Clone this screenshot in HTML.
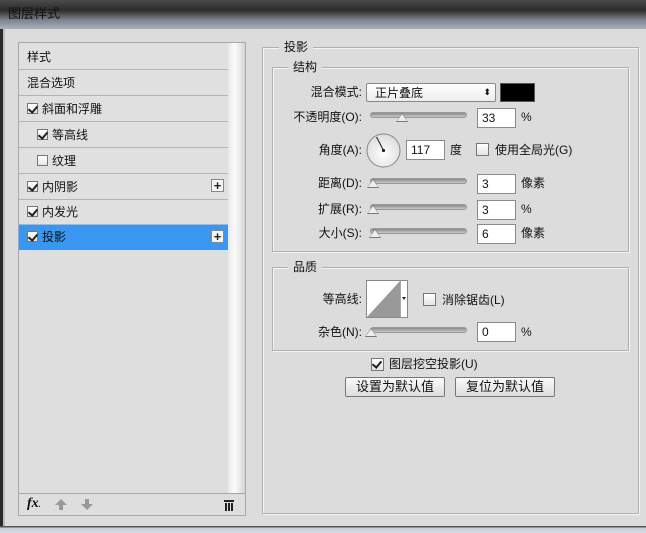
<!DOCTYPE html>
<html><head><meta charset="utf-8"><style>
*{margin:0;padding:0;box-sizing:border-box}
body{width:646px;height:533px;overflow:hidden;background:#dcdcdc;font-family:"Liberation Sans","Noto Sans CJK SC","WenQuanYi Zen Hei",sans-serif;font-size:12px;color:#111;position:relative}
.a{position:absolute}
.t{position:absolute;white-space:nowrap;line-height:14px}
.title{left:0;top:0;width:646px;height:29px;background:linear-gradient(#4a4a4a 0,#2c2c2c 35%,#7d858e 70%,#a9b1ba 100%)}
.row{position:absolute;left:19px;width:209px;height:26px;border-bottom:1px solid #b4b4b4;background:#e0e0e0}
.cb{position:absolute;width:11px;height:11px;border:1px solid #777;background:linear-gradient(#fff,#e4e4e4)}
.cb.on::after{content:"";position:absolute;left:2px;top:0px;width:4px;height:7px;border:solid #222;border-width:0 2px 2px 0;transform:rotate(40deg)}
.plus{position:absolute;right:4px;top:5px;width:13px;height:13px;border:1px solid #888;background:#f4f4f4;font-weight:bold;font-size:13px;line-height:11px;text-align:center;color:#222}
.box{position:absolute;border:1px solid #b0b0b0;box-shadow:1px 1px 0 #f4f4f4 inset,1px 1px 0 #f4f4f4}
.lg{position:absolute;background:#dcdcdc;padding:0 5px;line-height:14px}
.inp{position:absolute;width:39px;height:20px;background:#fff;border:1px solid #8a8a8a;padding:2px 4px;line-height:14px}
.tr{position:absolute;left:370px;width:97px;height:6px;border-radius:3px;background:linear-gradient(#8a8a8a,#c8c8c8);border:1px solid #999}
.th{position:absolute;width:0;height:0;border-left:6px solid transparent;border-right:6px solid transparent;border-bottom:9px solid #777}
.th::after{content:"";position:absolute;left:-5px;top:1px;border-left:5px solid transparent;border-right:5px solid transparent;border-bottom:7px solid #eee}
.lbl{position:absolute;text-align:right;width:100px;line-height:14px}
.btn{position:absolute;width:100px;height:20px;border:1px solid #777;border-radius:2px;background:linear-gradient(#fafafa,#dedede);text-align:center;line-height:18px;font-size:13px}
</style></head><body>
<div class="a title"></div>
<div class="t" style="left:8px;top:7px;color:#111;font-size:13px">图层样式</div>
<div class="a" style="left:0;top:29px;width:3px;height:497px;background:#2a2a2a"></div>
<div class="a" style="left:3px;top:29px;width:2px;height:497px;background:#bdbdbd"></div>
<div class="a" style="left:0;top:526px;width:646px;height:7px;background:linear-gradient(#555 0,#555 1px,#c8ccd4 2px,#d8dce4)"></div>

<div class="a" style="left:18px;top:42px;width:228px;height:474px;border:1px solid #a8a8a8;background:#dedede"></div>
<div class="a" style="left:228px;top:43px;width:17px;height:450px;background:linear-gradient(90deg,#e8e8e8,#fcfcfc 40%,#d4d4d4)"></div>
<div class="row" style="top:44px"><span class="t" style="left:8px;top:6px">样式</span></div>
<div class="row" style="top:70px"><span class="t" style="left:8px;top:6px">混合选项</span></div>
<div class="row" style="top:96px"><span class="cb on" style="left:8px;top:7px"></span><span class="t" style="left:23px;top:6px">斜面和浮雕</span></div>
<div class="row" style="top:122px"><span class="cb on" style="left:18px;top:7px"></span><span class="t" style="left:33px;top:6px">等高线</span></div>
<div class="row" style="top:148px"><span class="cb" style="left:18px;top:7px"></span><span class="t" style="left:33px;top:6px">纹理</span></div>
<div class="row" style="top:174px"><span class="cb on" style="left:8px;top:7px"></span><span class="t" style="left:23px;top:6px">内阴影</span><span class="plus">+</span></div>
<div class="row" style="top:200px;height:25px"><span class="cb on" style="left:8px;top:6px"></span><span class="t" style="left:23px;top:5px">内发光</span></div>
<div class="row" style="top:225px;height:25px;background:#3996f1;border:none"><span class="cb on" style="left:8px;top:6px"></span><span class="t" style="left:23px;top:5px">投影</span><span class="plus" style="top:5px">+</span></div>
<div class="a" style="left:19px;top:493px;width:226px;height:1px;background:#a8a8a8"></div>
<div class="t" style="left:27px;top:497px;font-style:italic;font-weight:bold;font-family:'Liberation Serif',serif;font-size:14px">fx<span style="font-size:8px">.</span></div>
<div class="a" style="left:55px;top:499px;width:0;height:0;border-left:6px solid transparent;border-right:6px solid transparent;border-bottom:6px solid #999"></div>
<div class="a" style="left:59px;top:505px;width:4px;height:5px;background:#999"></div>
<div class="a" style="left:85px;top:499px;width:4px;height:5px;background:#999"></div>
<div class="a" style="left:81px;top:504px;width:0;height:0;border-left:6px solid transparent;border-right:6px solid transparent;border-top:6px solid #999"></div>
<div class="a" style="left:224px;top:500px;width:10px;height:2px;background:#222"></div>
<div class="a" style="left:225px;top:503px;width:8px;height:8px;background:repeating-linear-gradient(90deg,#222 0 2px,#ddd 2px 3px)"></div>

<div class="box" style="left:262px;top:47px;width:377px;height:467px"></div>
<div class="lg" style="left:279px;top:40px">投影</div>
<div class="box" style="left:272px;top:67px;width:357px;height:185px"></div>
<div class="lg" style="left:288px;top:60px">结构</div>

<div class="lbl" style="left:262px;top:85px">混合模式:</div>
<div class="a" style="left:366px;top:83px;width:130px;height:19px;border:1px solid #888;border-radius:2px;background:linear-gradient(#fff,#ececec)"><span class="t" style="left:8px;top:2px">正片叠底</span><span class="t" style="right:4px;top:1px;font-size:9px">⬍</span></div>
<div class="a" style="left:500px;top:83px;width:35px;height:19px;background:#000;border:1px solid #555"></div>

<div class="lbl" style="left:262px;top:110px">不透明度(O):</div>
<div class="tr" style="top:112px"></div><div class="th" style="left:396px;top:113px"></div>
<div class="inp" style="left:477px;top:108px">33</div><div class="t" style="left:521px;top:110px">%</div>

<div class="lbl" style="left:262px;top:143px">角度(A):</div>
<svg class="a" style="left:366px;top:133px" width="35" height="35"><defs><radialGradient id="g" cx="50%" cy="60%" r="60%"><stop offset="0" stop-color="#fff"/><stop offset="1" stop-color="#dcdcdc"/></radialGradient></defs><circle cx="17.5" cy="17.5" r="16.5" fill="url(#g)" stroke="#888"/><line x1="17.5" y1="17.5" x2="10.5" y2="4" stroke="#333" stroke-width="1.2"/><circle cx="17.5" cy="17.5" r="1.6" fill="#222"/></svg>
<div class="inp" style="left:406px;top:140px">117</div><div class="t" style="left:450px;top:143px">度</div>
<div class="cb" style="left:476px;top:143px;width:13px;height:13px"></div><div class="t" style="left:495px;top:143px">使用全局光(G)</div>

<div class="lbl" style="left:262px;top:176px">距离(D):</div>
<div class="tr" style="top:178px"></div><div class="th" style="left:367px;top:179px"></div>
<div class="inp" style="left:477px;top:174px">3</div><div class="t" style="left:521px;top:176px">像素</div>

<div class="lbl" style="left:262px;top:202px">扩展(R):</div>
<div class="tr" style="top:204px"></div><div class="th" style="left:367px;top:205px"></div>
<div class="inp" style="left:477px;top:200px">3</div><div class="t" style="left:521px;top:202px">%</div>

<div class="lbl" style="left:262px;top:226px">大小(S):</div>
<div class="tr" style="top:228px"></div><div class="th" style="left:369px;top:229px"></div>
<div class="inp" style="left:477px;top:224px">6</div><div class="t" style="left:521px;top:226px">像素</div>

<div class="box" style="left:272px;top:267px;width:357px;height:84px"></div>
<div class="lg" style="left:288px;top:260px">品质</div>
<div class="lbl" style="left:262px;top:292px">等高线:</div>
<div class="a" style="left:366px;top:280px;width:42px;height:38px;border:1px solid #888;background:#fff">
<svg width="34" height="36" style="position:absolute;left:0;top:0"><polygon points="33,0 33,36 0,36" fill="#999"/></svg>
<div class="a" style="left:33px;top:0;width:1px;height:36px;background:#aaa"></div>
<div class="a" style="left:35px;top:16px;border-left:2px solid transparent;border-right:2px solid transparent;border-top:3px solid #222"></div></div>
<div class="cb" style="left:423px;top:293px;width:13px;height:13px"></div><div class="t" style="left:442px;top:293px">消除锯齿(L)</div>
<div class="lbl" style="left:262px;top:325px">杂色(N):</div>
<div class="tr" style="top:327px"></div><div class="th" style="left:365px;top:328px"></div>
<div class="inp" style="left:477px;top:322px">0</div><div class="t" style="left:521px;top:325px">%</div>

<div class="cb on" style="left:371px;top:358px;width:13px;height:13px"></div><div class="t" style="left:389px;top:357px">图层挖空投影(U)</div>
<div class="btn" style="left:345px;top:377px">设置为默认值</div>
<div class="btn" style="left:455px;top:377px">复位为默认值</div>
</body></html>
